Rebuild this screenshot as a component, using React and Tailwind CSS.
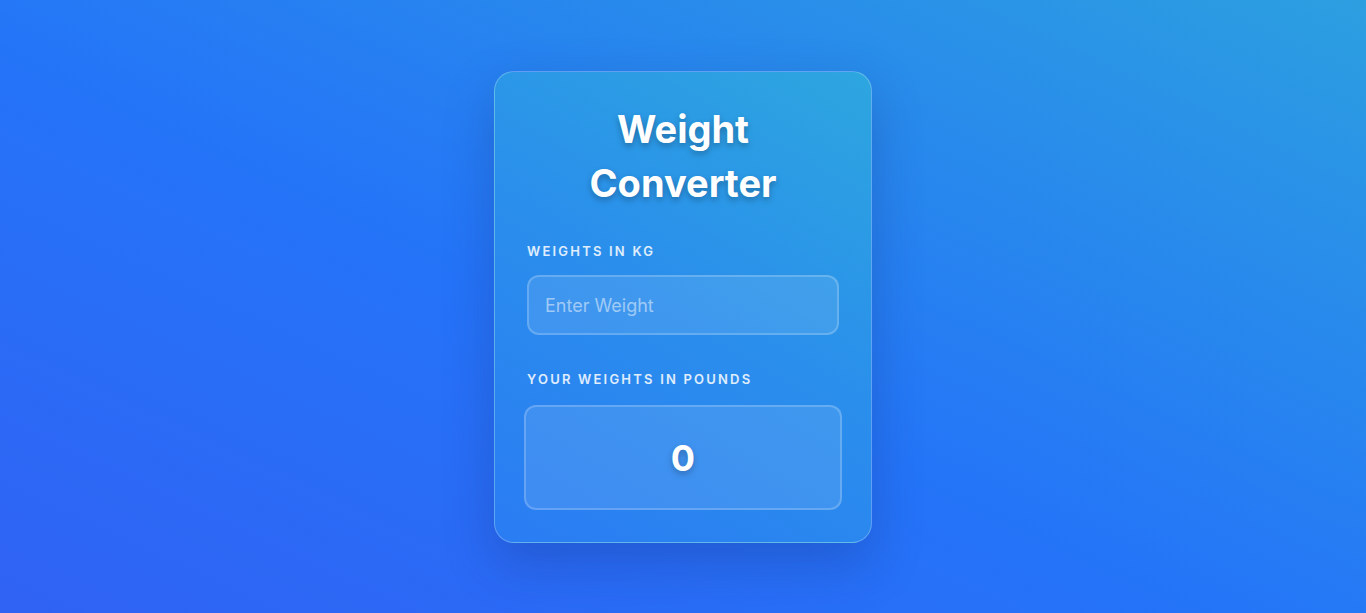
import { useState } from 'react';

const App = () => {
    const [ kg, setKg ] = useState('');

    const pounds = kg === '' || isNaN(Number(kg)) ? 0 : (Number(kg) * 2.20462).toFixed(2);

    return (
        <div
            className="min-h-screen w-full flex items-start justify-center bg-[linear-gradient(25deg,#3062f3_0%,#2474f8_45%,#2c9fe0_100%)] pt-[71px]"
            style={{ fontFamily: 'Inter, "Noto Sans", sans-serif' }}
        >
            {/* Card */}
            <div className="w-[378px] rounded-[20px] border border-white/25 bg-[linear-gradient(30deg,#2a7cf3_0%,#2a8eec_50%,#2da6df_100%)] px-8 pt-[30px] pb-[32px] shadow-[0_20px_50px_rgba(20,40,120,0.28)]">
                <h1 className="text-center text-[38px] leading-[54px] font-bold text-white [text-shadow:0_3px_6px_rgba(0,0,0,0.28)] mb-[31px]">
                    Weight<br />Converter
                </h1>

                <label className="block text-[13px] leading-5 font-semibold tracking-[2.2px] uppercase text-white/85 mb-[14px]">
                    Weights in KG
                </label>
                <input
                    type="text"
                    value={kg}
                    onChange={(e) => setKg(e.target.value)}
                    placeholder="Enter Weight"
                    className="w-full h-[60px] rounded-xl border-2 border-white/20 bg-white/10 px-4 text-[18px] text-white placeholder:text-white/50 outline-none"
                />

                <label className="block mt-[34px] text-[13px] leading-5 font-semibold tracking-[2.2px] uppercase text-white/85 mb-4">
                    Your weights in pounds
                </label>
                <div className="-mx-[3px] h-[105px] rounded-xl border-2 border-white/20 bg-white/10 flex items-center justify-center">
                    <span className="text-[36px] font-bold text-white [text-shadow:0_3px_6px_rgba(0,0,0,0.25)]">{pounds}</span>
                </div>
            </div>
        </div>
    );
};

export default App;
